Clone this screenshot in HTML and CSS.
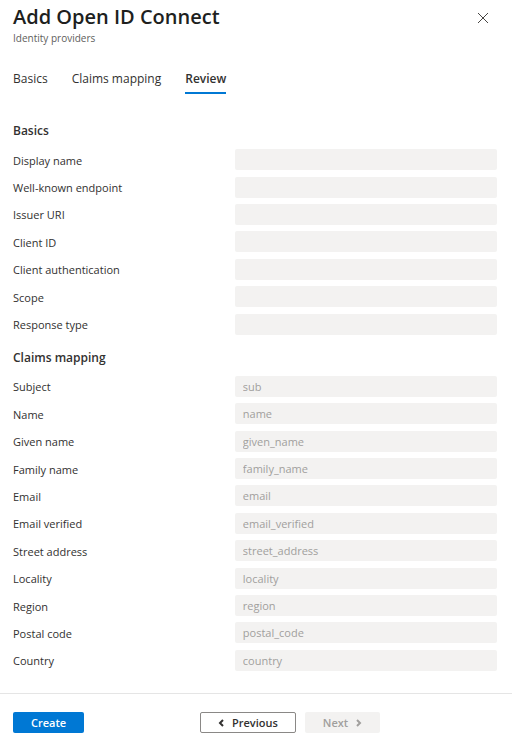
FILE: index.html
```html
<!DOCTYPE html>
<html lang="en">
<head>
<meta charset="utf-8">
<meta name="viewport" content="width=device-width, initial-scale=1">
<title>Add Open ID Connect</title>
<link rel="stylesheet" href="styles.css">
</head>
<body>
<form class="panel">
  <header class="header">
    <div class="heading">
      <h1 class="title">Add Open ID Connect</h1>
      <p class="subtitle">Identity providers</p>
    </div>
    <button class="close" type="button" aria-label="Close">
      <svg width="12" height="12" viewBox="0 0 12 12" aria-hidden="true"><path d="M1 1l10 10M11 1L1 11"/></svg>
    </button>
  </header>
  <nav class="tabs">
    <a class="tab" href="#basics">Basics</a>
    <a class="tab" href="#claims">Claims mapping</a>
    <a class="tab active" href="#review" aria-current="page">Review</a>
  </nav>
  <main class="content">
    <section class="group basics" id="basics">
      <h2 class="group-title">Basics</h2>
      <div class="row"><label for="display">Display name</label><input id="display" disabled></div>
      <div class="row"><label for="endpoint">Well-known endpoint</label><input id="endpoint" disabled></div>
      <div class="row"><label for="issuer">Issuer URI</label><input id="issuer" disabled></div>
      <div class="row"><label for="client">Client ID</label><input id="client" disabled></div>
      <div class="row"><label for="auth">Client authentication</label><input id="auth" disabled></div>
      <div class="row"><label for="scope">Scope</label><input id="scope" disabled></div>
      <div class="row"><label for="response">Response type</label><input id="response" disabled></div>
    </section>
    <section class="group claims" id="claims">
      <h2 class="group-title">Claims mapping</h2>
      <div class="row"><label for="sub">Subject</label><input id="sub" value="sub" disabled></div>
      <div class="row"><label for="name">Name</label><input id="name" value="name" disabled></div>
      <div class="row"><label for="given">Given name</label><input id="given" value="given_name" disabled></div>
      <div class="row"><label for="family">Family name</label><input id="family" value="family_name" disabled></div>
      <div class="row"><label for="email">Email</label><input id="email" value="email" disabled></div>
      <div class="row"><label for="verified">Email verified</label><input id="verified" value="email_verified" disabled></div>
      <div class="row"><label for="street">Street address</label><input id="street" value="street_address" disabled></div>
      <div class="row"><label for="locality">Locality</label><input id="locality" value="locality" disabled></div>
      <div class="row"><label for="region">Region</label><input id="region" value="region" disabled></div>
      <div class="row"><label for="postal">Postal code</label><input id="postal" value="postal_code" disabled></div>
      <div class="row"><label for="country">Country</label><input id="country" value="country" disabled></div>
    </section>
  </main>
  <footer class="footer">
    <button class="button primary" type="submit">Create</button>
    <div class="steps">
      <button class="button secondary" type="button">
        <svg width="6" height="8" viewBox="0 0 6 8" aria-hidden="true"><path d="M5 1L2 4l3 3"/></svg>
        Previous
      </button>
      <button class="button next" type="button" disabled>
        Next
        <svg width="6" height="8" viewBox="0 0 6 8" aria-hidden="true"><path d="M1 1l3 3-3 3"/></svg>
      </button>
    </div>
  </footer>
</form>
</body>
</html>
```
FILE: styles.css
```css
* {
  box-sizing: border-box;
}

body {
  margin: 0;
  background: #fff;
  color: #323130;
  font: 11px/16px "Open Sans", "Noto Sans", sans-serif;
}

.panel {
  display: flex;
  flex-direction: column;
  min-height: 100vh;
}

.header {
  display: flex;
  justify-content: space-between;
  align-items: flex-start;
  padding: 4px 21px 0 13px;
}

.title {
  margin: 0;
  color: #201f1e;
  font-size: 20px;
  font-weight: 600;
  line-height: 26px;
}

.subtitle {
  margin: 0;
  color: #605e5c;
  font-size: 10px;
}

.close {
  display: flex;
  margin-top: 6px;
  padding: 2px;
  border: 0;
  background: none;
}

svg {
  flex: none;
  fill: none;
  stroke: currentColor;
}

.close svg {
  stroke: #484644;
}

.tabs {
  display: flex;
  gap: 24px;
  padding: 23px 13px 0;
  font-size: 12px;
}

.tab {
  padding: 2px 0 5px;
  border-bottom: 2px solid transparent;
  color: #323130;
  text-decoration: none;
}

.active {
  border-color: #0078d4;
  font-weight: 600;
}

.content {
  display: flex;
  flex: 1;
  flex-direction: column;
  padding: 17px 15px 19px 13px;
}

.group {
  display: flex;
  flex-direction: column;
}

.basics {
  flex: 7 0 auto;
}

.claims {
  flex: 11 0 auto;
}

.group-title {
  margin: 0;
  padding: 10px 0 5px;
  font-size: 12px;
  font-weight: 600;
  line-height: 20px;
}

.row {
  display: grid;
  flex: 1 0 auto;
  grid-template-columns: 11fr 13fr;
  align-items: center;
}

.row label {
  padding-top: 2px;
}

.row input {
  width: 100%;
  height: 21px;
  padding: 0 8px;
  border: 0;
  border-radius: 2px;
  background: #f3f2f1;
  color: #a19f9d;
  font: inherit;
}

.footer {
  display: grid;
  grid-template-columns: 5fr 8fr;
  padding: 18px 13px;
  border-top: 1px solid #e5e5e5;
}

.steps {
  display: flex;
  gap: 9px;
}

.button {
  display: flex;
  align-items: center;
  justify-content: center;
  justify-self: start;
  gap: 8px;
  height: 21px;
  padding: 0 17px;
  border: 1px solid transparent;
  border-radius: 2px;
  font: inherit;
  font-weight: 600;
}

.button svg {
  stroke-width: 2;
}

.primary {
  background: #0078d4;
  color: #fff;
}

.secondary {
  border-color: #8a8886;
  background: #fff;
  color: #323130;
}

.next {
  background: #f3f2f1;
  color: #a19f9d;
}
```
